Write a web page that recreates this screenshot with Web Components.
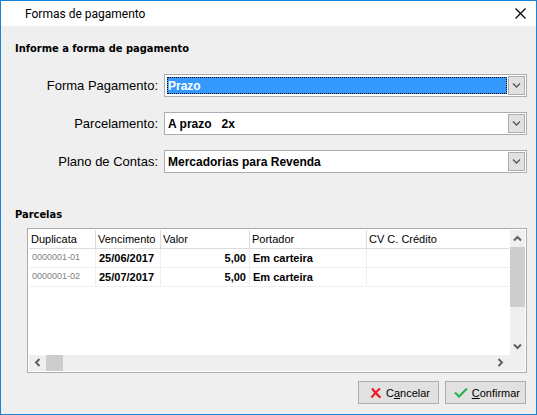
<!DOCTYPE html>
<html lang="pt-BR">
<head>
<meta charset="utf-8">
<title>Formas de pagamento</title>
<style>
  body {
    margin: 0;
    background: #efefef;
    color: #000;
    font: 11px "Liberation Sans", Arial, sans-serif;
  }
</style>
</head>
<body>
<payment-window heading="Formas de pagamento">
  <form-section heading="Informe a forma de pagamento">
    <select-field label="Forma Pagamento:" value="Prazo" active></select-field>
    <select-field label="Parcelamento:" value="A prazo&nbsp;&nbsp; 2x"></select-field>
    <select-field label="Plano de Contas:" value="Mercadorias para Revenda"></select-field>
  </form-section>
  <form-section heading="Parcelas" fill>
    <installment-grid></installment-grid>
  </form-section>
  <action-button slot="actions" icon="cancel">C<u>a</u>ncelar</action-button>
  <action-button slot="actions" icon="confirm"><u>C</u>onfirmar</action-button>
</payment-window>

<script>
const INSTALLMENTS = [
  { number: "0000001-01", due: "25/06/2017", value: "5,00", holder: "Em carteira", cv: "" },
  { number: "0000001-02", due: "25/07/2017", value: "5,00", holder: "Em carteira", cv: "" },
];

const ICONS = {
  cancel: `
    <svg width="12" height="12" viewBox="0 0 12 12">
      <path d="M2 1.5C4 4 7 8 10.5 10.5M10 1.5C7 4 4 7.500 1.500 10.500" fill="none" stroke="#ed1c24" stroke-width="2.200"/>
    </svg>`,
  confirm: `
    <svg width="14" height="12" viewBox="0 0 14 12">
      <path d="M1 5.500L5 9.500L13 1.500" fill="none" stroke="#22b14c" stroke-width="2"/>
    </svg>`,
};

const ARROWS = {
  up: "M1 6.500L4.500 3L8 6.500",
  down: "M1 2.500L4.500 6L8 2.500",
  left: "M6.500 1L3 4.500L6.500 8",
  right: "M2.500 1L6 4.500L2.500 8",
};

class PaymentWindow extends HTMLElement {
  constructor() {
    super();
    this.attachShadow({ mode: "open" });
  }

  connectedCallback() {
    this.shadowRoot.innerHTML = `
      <style>
        :host {
          display: flex;
          flex-direction: column;
          box-sizing: border-box;
          min-height: 100vh;
          border: 1px solid #1883d7;
        }
        header {
          display: flex;
          align-items: center;
          justify-content: space-between;
          height: 25px;
          padding: 0 10px 0 24px;
          background: #fff;
        }
        h1 {
          margin: 0;
          font: 12px Roboto, "Noto Sans", sans-serif;
        }
        header button {
          display: flex;
          padding: 0;
          border: 0;
          background: none;
        }
        main {
          display: flex;
          flex: 1;
          flex-direction: column;
          gap: 34px;
          padding: 15px 9px 8px 14px;
        }
        footer {
          display: flex;
          justify-content: flex-end;
          gap: 6px;
          padding: 0 10px 10px;
        }
      </style>
      <header>
        <h1>${this.getAttribute("heading")}</h1>
        <button type="button" aria-label="Fechar">
          <svg width="11" height="11" viewBox="0 0 11 11">
            <path d="M.5 .5L10.500 10.500M10.500 .5L.5 10.500" stroke="#000" stroke-width="1.200"/>
          </svg>
        </button>
      </header>
      <main><slot></slot></main>
      <footer><slot name="actions"></slot></footer>
    `;
  }
}

class FormSection extends HTMLElement {
  constructor() {
    super();
    this.attachShadow({ mode: "open" });
  }

  connectedCallback() {
    this.shadowRoot.innerHTML = `
      <style>
        :host {
          display: flex;
          flex-direction: column;
        }
        :host([fill]) {
          flex: 1;
        }
        h2 {
          margin: 0;
          font: bold 11px/16px "DejaVu Sans Condensed", "DejaVu Sans", sans-serif;
        }
        .content {
          display: flex;
          flex: 1;
          flex-direction: column;
          gap: 15px;
          padding-top: 17px;
        }
        :host([fill]) .content {
          padding: 5px 0 0 12px;
        }
      </style>
      <h2>${this.getAttribute("heading")}</h2>
      <div class="content"><slot></slot></div>
    `;
  }
}

class SelectField extends HTMLElement {
  constructor() {
    super();
    this.attachShadow({ mode: "open" });
  }

  connectedCallback() {
    this.shadowRoot.innerHTML = `
      <style>
        :host {
          display: flex;
          align-items: center;
          gap: 6px;
        }
        label {
          width: 143px;
          text-align: right;
          font-size: 13px;
        }
        .box {
          display: flex;
          flex: 1;
          gap: 1px;
          box-sizing: border-box;
          height: 23px;
          padding: 1px 1px 1px 2px;
          border: 1px solid #abadb3;
          background: #fff;
        }
        select {
          flex: 1;
          min-width: 0;
          margin: 1px 0;
          padding: 0;
          appearance: none;
          border: 1px solid transparent;
          border-radius: 0;
          outline: 0;
          background: #fff;
          color: #000;
          font: bold 12px "Liberation Sans", Arial, sans-serif;
        }
        :host([active]) select {
          border: 1px dotted #000;
          background: #3399ff;
          color: #fff;
        }
        button {
          display: flex;
          align-items: center;
          justify-content: center;
          width: 17px;
          padding: 0;
          border: 1px solid #abadb3;
          background: #e1e1e1;
        }
      </style>
      <label for="field">${this.getAttribute("label")}</label>
      <div class="box">
        <select id="field"><option>${this.getAttribute("value")}</option></select>
        <button type="button" tabindex="-1" aria-label="Abrir lista">
          <svg width="9" height="9" viewBox="0 0 9 9">
            <path d="${ARROWS.down}" fill="none" stroke="#555" stroke-width="1.300"/>
          </svg>
        </button>
      </div>
    `;
    const select = this.shadowRoot.querySelector("select");
    this.shadowRoot.querySelector("button").addEventListener("click", () => select.showPicker());
  }
}

class ScrollTrack extends HTMLElement {
  constructor() {
    super();
    this.attachShadow({ mode: "open" });
  }

  connectedCallback() {
    const vertical = this.hasAttribute("vertical");
    const [first, last] = vertical ? ["up", "down"] : ["left", "right"];
    this.shadowRoot.innerHTML = `
      <style>
        :host {
          display: flex;
          flex-direction: ${vertical ? "column" : "row"};
          background: #efefef;
        }
        button {
          display: flex;
          align-items: center;
          justify-content: center;
          width: ${vertical ? 15 : 17}px;
          height: ${vertical ? 17 : 15}px;
          padding: 0;
          border: 0;
          background: none;
        }
        .track {
          flex: 1;
        }
        .thumb {
          width: ${vertical ? "100%" : "17px"};
          height: ${vertical ? "60px" : "100%"};
          background: #cdcdcd;
        }
      </style>
      ${this.arrow(first)}
      <div class="track"><div class="thumb"></div></div>
      ${this.arrow(last)}
    `;
  }

  arrow(direction) {
    return `
      <button type="button" tabindex="-1" aria-label="Rolar">
        <svg width="9" height="9" viewBox="0 0 9 9">
          <path d="${ARROWS[direction]}" fill="none" stroke="#606060" stroke-width="2"/>
        </svg>
      </button>`;
  }
}

class InstallmentGrid extends HTMLElement {
  constructor() {
    super();
    this.attachShadow({ mode: "open" });
  }

  connectedCallback() {
    this.shadowRoot.innerHTML = `
      <style>
        :host {
          display: grid;
          flex: 1;
          grid-template-columns: 1fr 15px;
          grid-template-rows: 1fr 16px;
          column-gap: 1px;
          padding: 1px;
          border: 1px solid #abadb3;
          background: #fff;
        }
        table {
          align-self: start;
          width: 100%;
          table-layout: fixed;
          border-collapse: separate;
          border-spacing: 0;
        }
        th, td {
          box-sizing: border-box;
          height: 19px;
          padding: 0 2px;
          border-right: 1px solid #efefef;
          border-bottom: 1px solid #efefef;
          line-height: 12px;
          text-align: left;
          white-space: nowrap;
        }
        th {
          border-color: #dcdcdc;
          font-weight: normal;
        }
        td {
          padding: 0 3px;
          font-weight: bold;
        }
        th:last-child, td:last-child {
          border-right: 0;
        }
        .number {
          padding-top: 2px;
          color: #808080;
          font-size: 9px;
          font-weight: normal;
          vertical-align: top;
        }
        .value {
          text-align: right;
        }
        .corner {
          grid-column: 2;
          grid-row: 2;
          margin-left: -1px;
          background: #efefef;
        }
      </style>
      <table>
        <colgroup>
          <col style="width: 67px"><col style="width: 65px"><col style="width: 89px">
          <col style="width: 117px"><col>
        </colgroup>
        <thead>
          <tr><th>Duplicata</th><th>Vencimento</th><th>Valor</th><th>Portador</th><th>CV C. Crédito</th></tr>
        </thead>
        <tbody>
          ${INSTALLMENTS.map((row) => `
            <tr>
              <td class="number">${row.number}</td>
              <td>${row.due}</td>
              <td class="value">${row.value}</td>
              <td>${row.holder}</td>
              <td>${row.cv}</td>
            </tr>`).join("")}
        </tbody>
      </table>
      <scroll-track vertical></scroll-track>
      <scroll-track></scroll-track>
      <div class="corner"></div>
    `;
  }
}

class ActionButton extends HTMLElement {
  constructor() {
    super();
    this.attachShadow({ mode: "open" });
  }

  connectedCallback() {
    this.shadowRoot.innerHTML = `
      <style>
        :host {
          display: block;
        }
        button {
          display: flex;
          align-items: center;
          justify-content: flex-end;
          gap: 4px;
          box-sizing: border-box;
          min-width: 81px;
          height: 23px;
          padding: 0 5px;
          border: 1px solid #adadad;
          background: #e1e1e1;
          color: #000;
          font: inherit;
        }
        :host([icon="cancel"]) button {
          padding-right: 8px;
        }
      </style>
      <button type="button">
        ${ICONS[this.getAttribute("icon")]}
        <span><slot></slot></span>
      </button>
    `;
  }
}

customElements.define("payment-window", PaymentWindow);
customElements.define("form-section", FormSection);
customElements.define("select-field", SelectField);
customElements.define("scroll-track", ScrollTrack);
customElements.define("installment-grid", InstallmentGrid);
customElements.define("action-button", ActionButton);
</script>
</body>
</html>
